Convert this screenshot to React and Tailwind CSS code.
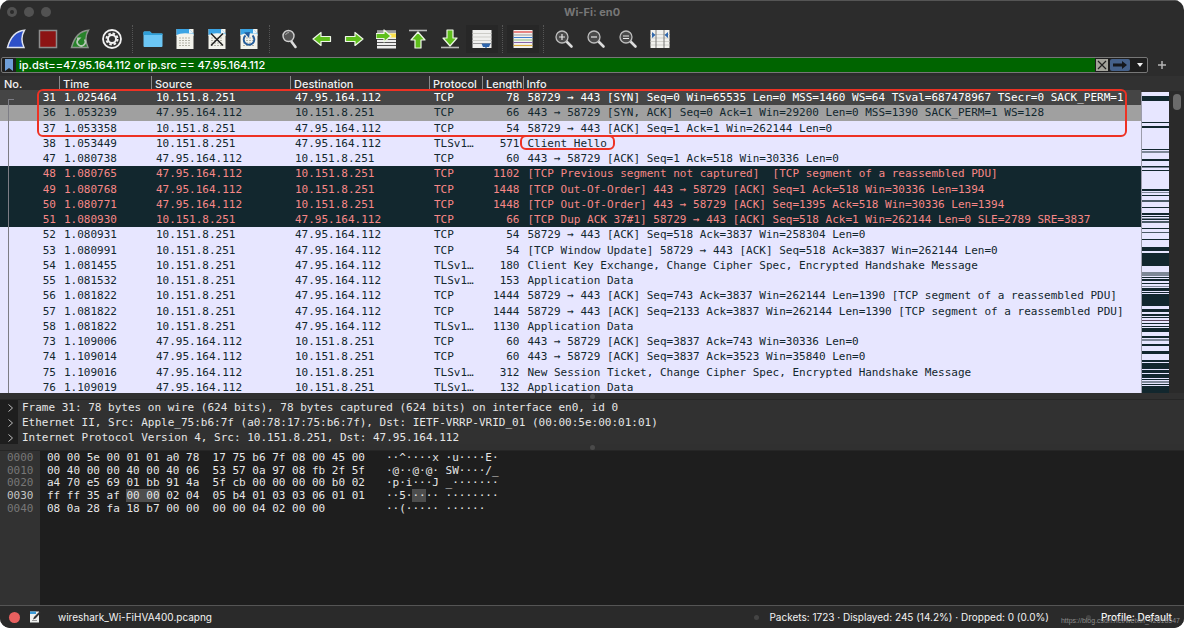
import React from 'react';

const packets = [
  ['31', '1.025464', 'TCP', '78', '58729 → 443 [SYN] Seq=0 Win=65535 Len=0 MSS=1460 WS=64 TSval=687478967 TSecr=0 SACK_PERM=1', 'out', 'selected'],
  ['36', '1.053239', 'TCP', '66', '443 → 58729 [SYN, ACK] Seq=0 Ack=1 Win=29200 Len=0 MSS=1390 SACK_PERM=1 WS=128', 'in', 'syn'],
  ['37', '1.053358', 'TCP', '54', '58729 → 443 [ACK] Seq=1 Ack=1 Win=262144 Len=0', 'out', 'tcp'],
  ['38', '1.053449', 'TLSv1…', '571', 'Client Hello', 'out', 'tcp'],
  ['47', '1.080738', 'TCP', '60', '443 → 58729 [ACK] Seq=1 Ack=518 Win=30336 Len=0', 'in', 'tcp'],
  ['48', '1.080765', 'TCP', '1102', '[TCP Previous segment not captured]  [TCP segment of a reassembled PDU]', 'in', 'bad'],
  ['49', '1.080768', 'TCP', '1448', '[TCP Out-Of-Order] 443 → 58729 [ACK] Seq=1 Ack=518 Win=30336 Len=1394', 'in', 'bad'],
  ['50', '1.080771', 'TCP', '1448', '[TCP Out-Of-Order] 443 → 58729 [ACK] Seq=1395 Ack=518 Win=30336 Len=1394', 'in', 'bad'],
  ['51', '1.080930', 'TCP', '66', '[TCP Dup ACK 37#1] 58729 → 443 [ACK] Seq=518 Ack=1 Win=262144 Len=0 SLE=2789 SRE=3837', 'out', 'bad'],
  ['52', '1.080931', 'TCP', '54', '58729 → 443 [ACK] Seq=518 Ack=3837 Win=258304 Len=0', 'out', 'tcp'],
  ['53', '1.080991', 'TCP', '54', '[TCP Window Update] 58729 → 443 [ACK] Seq=518 Ack=3837 Win=262144 Len=0', 'out', 'tcp'],
  ['54', '1.081455', 'TLSv1…', '180', 'Client Key Exchange, Change Cipher Spec, Encrypted Handshake Message', 'out', 'tcp'],
  ['55', '1.081532', 'TLSv1…', '153', 'Application Data', 'out', 'tcp'],
  ['56', '1.081822', 'TCP', '1444', '58729 → 443 [ACK] Seq=743 Ack=3837 Win=262144 Len=1390 [TCP segment of a reassembled PDU]', 'out', 'tcp'],
  ['57', '1.081822', 'TCP', '1444', '58729 → 443 [ACK] Seq=2133 Ack=3837 Win=262144 Len=1390 [TCP segment of a reassembled PDU]', 'out', 'tcp'],
  ['58', '1.081822', 'TLSv1…', '1130', 'Application Data', 'out', 'tcp'],
  ['73', '1.109006', 'TCP', '60', '443 → 58729 [ACK] Seq=3837 Ack=743 Win=30336 Len=0', 'in', 'tcp'],
  ['74', '1.109014', 'TCP', '60', '443 → 58729 [ACK] Seq=3837 Ack=3523 Win=35840 Len=0', 'in', 'tcp'],
  ['75', '1.109016', 'TLSv1…', '312', 'New Session Ticket, Change Cipher Spec, Encrypted Handshake Message', 'in', 'tcp'],
  ['76', '1.109019', 'TLSv1…', '132', 'Application Data', 'in', 'tcp'],
];

const rowColors = {
  selected: 'bg-[#454545] text-white',
  syn: 'bg-[#a0a0a0] text-[#12272e]',
  tcp: 'bg-[#e7e6ff] text-[#12272e]',
  bad: 'bg-[#12272e] text-[#f78787]',
};

const LOCAL = '10.151.8.251';
const REMOTE = '47.95.164.112';

// [y, height, color] of each stripe in the packet overview
const D = '#12272e';
const G = '#7d8797';
const stripes = [
  [4, 5, D], [30, 1, D], [34, 2, D], [57, 1, D], [59, 2, G], [67, 2, D], [74, 1, D], [75, 1, G],
  [78, 1, D], [97, 2, D], [100, 1, G], [103, 1, D], [108, 2, '#4a5a66'], [115, 1, D], [121, 2, D],
  [124, 1, D], [126, 1, G], [127, 1, D], [129, 2, '#4a5a66'], [136, 1, D], [140, 1, '#4a5a66'],
  [147, 1, D], [155, 4, D], [161, 13, D], [180, 4, G], [185, 1, D], [187, 2, D], [191, 1, D],
  [194, 1, G], [196, 3, D], [200, 1, D], [202, 12, D], [217, 3, D], [222, 2, D], [225, 1, D],
  [228, 1, '#55415a'], [231, 1, D], [234, 1, D], [236, 4, D], [244, 2, D], [247, 2, G], [252, 2, D],
  [259, 3, D], [268, 2, D], [271, 6, D], [278, 3, D], [282, 4, D], [287, 1, D], [289, 2, G],
  [292, 1, D], [294, 7, D],
];

const details = [
  'Frame 31: 78 bytes on wire (624 bits), 78 bytes captured (624 bits) on interface en0, id 0',
  'Ethernet II, Src: Apple_75:b6:7f (a0:78:17:75:b6:7f), Dst: IETF-VRRP-VRID_01 (00:00:5e:00:01:01)',
  'Internet Protocol Version 4, Src: 10.151.8.251, Dst: 47.95.164.112',
];

const mark = (s) => <span className="bg-[#4d4d4d]">{s}</span>;

const hexRows = [
  ['0000', '00 00 5e 00 01 01 a0 78  17 75 b6 7f 08 00 45 00', '··^····x ·u····E·'],
  ['0010', '00 40 00 00 40 00 40 06  53 57 0a 97 08 fb 2f 5f', '·@··@·@· SW····/_'],
  ['0020', 'a4 70 e5 69 01 bb 91 4a  5f cb 00 00 00 00 b0 02', '·p·i···J _·······'],
  ['0030', <>ff ff 35 af {mark('00 00')} 02 04  05 b4 01 03 03 06 01 01</>, <>··5·{mark('··')}·· ········</>],
  ['0040', '08 0a 28 fa 18 b7 00 00  00 00 04 02 00 00', '··(····· ······'],
];

const Icon = ({ children }) => (
  <svg viewBox="0 0 20 20" className="size-5 shrink-0" fill="none">{children}</svg>
);

const Page = ({ children }) => (
  <Icon>
    <path d="M1.500 0h17v20h-17z" fill="#f3f3ec" />
    <path d="M1.500 0H14l4.500 4.500V6h-17z" fill="#3ba4e4" />
    <path d="M14 0v4.500h4.500z" fill="#e8f4fb" />
    <path d="M1.500 6q5-3 17-1v2h-17z" fill="#f3f3ec" />
    <path d="M4 9h12M4 11.500h12M4 14h12M4 16.500h12" stroke="#b3b3a6" strokeDasharray="2 1" />
    {children}
  </Icon>
);

const Lens = ({ children }) => (
  <Icon>
    <path d="M12.500 12.500l5 5" stroke="#dcdcdc" strokeWidth="2.600" strokeLinecap="round" />
    <circle cx="8" cy="8" r="6" fill="#4a4a4a" stroke="#bdbdbd" strokeWidth="1.300" />
    <path d={children} stroke="#e6e6e6" strokeWidth="1.200" />
  </Icon>
);

const arrow = { fill: '#5fbf1c', stroke: '#eef7e6', strokeWidth: 1.2, strokeLinejoin: 'round' };

const toolbar = [
  [
    ['Start capture', <Icon><path d="M1.500 18.500C4 9 9 2 18.500 1.200c-3.500 6-3.500 11-.5 17.300z" fill="#2d50c8" stroke="#dfe3ee" strokeWidth="1.500" /></Icon>],
    ['Stop capture', <Icon><path d="M1.500 1.500h17v17h-17z" fill="#8c1414" stroke="#8d8d8d" strokeWidth="1.500" /></Icon>],
    ['Restart capture', <Icon>
      <path d="M1.500 18.500C4 9 9 2 18.500 1.200c-3.500 6-3.500 11-.5 17.300z" fill="#27832a" stroke="#8b938b" strokeWidth="1.500" />
      <path d="M8 10.500a4 4 0 1 0 6.500 0" stroke="#b6c8b6" strokeWidth="1.700" /><path d="M7 13V8.500h4.500z" fill="#b6c8b6" />
    </Icon>],
    ['Capture options', <Icon>
      <circle cx="10" cy="10" r="9" fill="#333" stroke="#f2f2f2" strokeWidth="1.800" />
      <circle cx="10" cy="10" r="5.500" stroke="#f2f2f2" strokeWidth="2" strokeDasharray="2.500 1.800" />
      <circle cx="10" cy="10" r="4" stroke="#f2f2f2" strokeWidth="2" />
    </Icon>],
  ],
  [
    ['Open file', <Icon><path d="M.5 3.500q0-1 1-1H7l2 2h9.500q1 0 1 1V17q0 1-1 1h-17q-1 0-1-1z" fill="#6cc7f5" /><path d="M.5 6h19V4.500H9L7 2.500H1.500q-1 0-1 1z" fill="#2f9fd8" /></Icon>],
    ['Save file', <Page />],
    ['Close file', <Page><path d="M4 4.500l12 12M16 4.500l-12 12" stroke="#222" strokeWidth="1.500" /></Page>],
    ['Reload file', <Page><path d="M6.500 6.500A5.300 5.300 0 1 0 13.500 6.500" stroke="#245d9c" strokeWidth="1.900" /><path d="M5 3.500l6-.5-1 6z" fill="#245d9c" /></Page>],
  ],
  [
    ['Find packet', <Icon>
      <path d="M11 12l4.500 6" stroke="#dcdcdc" strokeWidth="2.600" strokeLinecap="round" />
      <circle cx="8.500" cy="7" r="5.500" fill="#555" stroke="#cfcfcf" strokeWidth="1.400" /><path d="M5.500 6q1-2.500 3.500-2.500" stroke="#aaa" />
    </Icon>],
    ['Previous packet', <Icon><path d="M1 10l8-6.500v4h9.500v5H9v4z" {...arrow} /></Icon>],
    ['Next packet', <Icon><path d="M19 10l-8-6.500v4H1.500v5H11v4z" {...arrow} /></Icon>],
    ['Go to packet', <Icon>
      <path d="M1 1.500h19v18H1z" fill="#eee" /><path d="M13 4.500h7v4h-7z" fill="#fbe04a" />
      <path d="M1 3h19M1 10.500h19M1 13.500h19M1 16.500h19" stroke="#555" strokeWidth="1.200" />
      <path d="M15 7L8 1v3.500H0v5h8V13z" {...arrow} />
    </Icon>],
    ['First packet', <Icon><path d="M1 1.500h18" stroke="#b9b9b9" strokeWidth="1.600" /><path d="M10 3l7 8h-4v8H7v-8H3z" {...arrow} /></Icon>],
    ['Last packet', <Icon><path d="M1 18.500h18" stroke="#b9b9b9" strokeWidth="1.600" /><path d="M10 17l7-8h-4V1H7v8H3z" {...arrow} /></Icon>],
    ['Auto scroll', <Icon>
      <path d="M.5 1h19v18H.5z" fill="#f0f0ee" /><path d="M.5 4.500h19M.5 8h19M.5 11.500h19" stroke="#cdcdc8" /><path d="M.5 14.500h19" stroke="#999" />
      <path d="M9.500 14.500h9L17 18h-2l-1 1.500-1-1.500h-2z" fill="#2e66ad" />
    </Icon>, true],
  ],
  [
    ['Colorize packets', <Icon>
      <path d="M.5 1h19v18H.5z" fill="#f2f2f0" />
      <path d="M.5 3h19" stroke="#e03b3b" strokeWidth="1.200" /><path d="M.5 6h19" stroke="#999" />
      <path d="M.5 8.500h19" stroke="#3f7fd0" /><path d="M.5 11h19" stroke="#8fbf80" />
      <path d="M.5 13.500h19" stroke="#8564a8" /><path d="M.5 16.500h19" stroke="#d9ad3a" strokeWidth="1.200" />
    </Icon>, true],
  ],
  [
    ['Zoom in', <Lens>M5 8h6M8 5v6</Lens>],
    ['Zoom out', <Lens>M5 8h6</Lens>],
    ['Normal size', <Lens>M5 7h6M5 9.500h6</Lens>],
    ['Resize columns', <Icon>
      <path d="M.5 1h19v18H.5z" fill="#f0f0ee" /><path d="M.5 5.500h19M.5 9h19M.5 12.500h19M.5 16h19" stroke="#cfcfca" />
      <path d="M6 1v18M14 1v18" stroke="#777" /><path d="M2 3v6l3.500-3zM18 3v6l-3.500-3z" fill="#2e66ad" />
    </Icon>],
  ],
];

const TitleBar = () => (
  <header className="flex h-[23px] items-center border-t border-[#555555] px-[7px]">
    <div className="flex flex-1 gap-[7px]">
      <span className="flex size-2.5 items-center justify-center rounded-full bg-[#525252]"><span className="size-1 rounded-full bg-[#2b2b2b]" /></span>
      <span className="size-2.5 rounded-full bg-[#525252]" />
      <span className="size-2.5 rounded-full bg-[#525252]" />
    </div>
    <h1 className="text-[11px] font-bold text-[#777777]">Wi-Fi: en0</h1>
    <div className="flex-1" />
  </header>
);

const Toolbar = () => (
  <nav className="flex h-[31px] items-center">
    {toolbar.map((group, i) => (
      <React.Fragment key={i}>
        {i > 0 && <span className="flex w-[9px] justify-center"><span className="h-7 border-l border-dotted border-[#555555]" /></span>}
        {group.map(([label, icon, active]) => (
          <button key={label} aria-label={label} className={`flex h-7 w-8 items-center justify-center ${active ? 'bg-[#272727]' : ''}`}>
            {icon}
          </button>
        ))}
      </React.Fragment>
    ))}
  </nav>
);

const FilterBar = () => (
  <form className="flex h-[22px] items-center">
    <div className="ml-px flex h-4 flex-1 items-center rounded-xs border border-[#777777] bg-[#1e1e1e]">
      <button type="button" aria-label="Bookmarks" className="flex w-[14px] justify-center">
        <svg viewBox="0 0 8 12" className="h-3 w-2"><path d="M0 0h8v12L4 9l-4 3z" fill="#6f9fd8" /></svg>
      </button>
      <input
        aria-label="Display filter"
        defaultValue="ip.dst==47.95.164.112 or ip.src == 47.95.164.112"
        className="h-[14px] min-w-0 flex-1 bg-[#006400] pl-[3px] text-[11px] font-medium text-white outline-none"
      />
      <div className="flex h-[14px] items-center gap-[2px] pl-px">
        <button type="button" aria-label="Clear" className="flex size-3 items-center justify-center bg-[#a3a39b]">
          <svg viewBox="0 0 10 10" className="size-2.5"><path d="M1 1l8 8M9 1L1 9" stroke="#222" strokeWidth="1.2" /></svg>
        </button>
        <button aria-label="Apply" className="flex h-3 w-5 items-center justify-center rounded-xs bg-[#45618a]">
          <svg viewBox="0 0 14 8" className="h-2 w-3.5"><path d="M0 2.500h9V0l5 4-5 4V5.500H0z" fill="#15181d" /></svg>
        </button>
        <button type="button" aria-label="Recent filters" className="flex w-[15px] justify-center">
          <svg viewBox="0 0 6 4" className="h-1 w-1.5"><path d="M0 0h6L3 4z" fill="#f0f0f0" /></svg>
        </button>
      </div>
    </div>
    <button type="button" aria-label="Add filter button" className="flex w-9 justify-center pr-2">
      <svg viewBox="0 0 8 8" className="size-2"><path d="M4 0v8M0 4h8" stroke="#b5b5b5" strokeWidth="1.5" /></svg>
    </button>
  </form>
);

const PacketList = () => (
  <section className="relative flex h-[317px] overflow-hidden bg-[#313131]">
    <table className="h-[319px] min-w-0 flex-1 table-fixed border-collapse">
      <colgroup>
        <col className="w-[59px]" />
        <col className="w-[92px]" />
        <col className="w-[139px]" />
        <col className="w-[139px]" />
        <col className="w-[53px]" />
        <col className="w-[40px]" />
        <col />
      </colgroup>
      <thead>
        <tr className="h-[14px] text-left text-[11px] leading-[16px] text-[#f0f0f0]">
          {['No.', 'Time', 'Source', 'Destination', 'Protocol', 'Length', 'Info'].map((h) => (
            <th key={h} className="overflow-hidden p-0 font-medium whitespace-nowrap">
              <div className={`h-[14px] overflow-hidden ${h === 'No.' ? 'pl-1' : 'border-l border-[#8a8a8a] pl-[3px]'}`}>{h}</div>
            </th>
          ))}
        </tr>
      </thead>
      <tbody className="font-['DejaVu_Sans_Mono',monospace] text-[11px] leading-[15px]">
        {packets.map(([no, time, proto, len, info, dir, kind]) => (
          <tr key={no} className={`whitespace-pre ${rowColors[kind]}`}>
            <td className="p-0 pr-[3px] text-right">{no}</td>
            <td className="p-0 pl-[5px]">{time}</td>
            <td className="p-0 pl-[5px]">{dir === 'out' ? LOCAL : REMOTE}</td>
            <td className="p-0 pl-[5px]">{dir === 'out' ? REMOTE : LOCAL}</td>
            <td className="p-0 pl-[5px]">{proto}</td>
            <td className="p-0 pr-[3px] text-right">{len}</td>
            <td className="overflow-hidden p-0 pl-[5px]">{info}</td>
          </tr>
        ))}
      </tbody>
    </table>
    <div className="w-7 pt-4">
      <svg viewBox="0 0 28 301" preserveAspectRatio="none" className="h-[301px] w-7 border-l border-[#9c9cab]" shapeRendering="crispEdges">
        <path d="M0 0h28v301H0z" fill="#e7e6ff" />
        {stripes.map(([y, h, color]) => (
          <rect key={y} y={y} width="28" height={h} fill={color} />
        ))}
      </svg>
    </div>
    <div className="flex w-[15px] justify-center pt-[15px]">
      <div className="flex w-full justify-center bg-[#2a2a2a] pt-[3px]">
        <div className="h-4 w-2 rounded-full bg-[#6b6b6b]" />
      </div>
    </div>

    {/* conversation bracket and highlights */}
    <div className="absolute top-[23px] bottom-0 left-2 w-1.5 border-t border-l border-[#7d7d85]" />
    <div className="absolute top-[13px] right-[57px] left-[37px] h-[48px] rounded-md border-2 border-[#ee3224]" />
    <div className="absolute top-[59px] left-[520px] h-[15px] w-[95px] rounded-md border-2 border-[#ee3224]" />
  </section>
);

const Splitter = () => (
  <div className="flex h-[7px] items-center justify-center border-b border-[#262626] bg-[#303030]">
    <span className="size-[5px] rounded-full bg-[#4a4a4a]" />
  </div>
);

const PacketDetails = () => (
  <section className="h-[44px] overflow-hidden font-['DejaVu_Sans_Mono',monospace] text-[11px] leading-[15px] text-[#e6e6e6]">
    {details.map((line) => (
      <div key={line} className="flex bg-[#313131] whitespace-pre">
        <button aria-label="Expand" className="flex w-[18px] items-center justify-center bg-[#1e1e1e] pl-[3px]">
          <svg viewBox="0 0 5 8" className="h-2 w-[5px]"><path d="M.5.5L4.500 4l-4 3.500" fill="none" stroke="#bdbdbd" /></svg>
        </button>
        <span className="pl-1">{line}</span>
      </div>
    ))}
  </section>
);

const HexDump = () => (
  <section className="flex flex-1 items-start bg-[linear-gradient(to_right,#323232_40px,#1e1e1e_40px)] pt-px">
    <table className="h-[63px] border-collapse font-['DejaVu_Sans_Mono',monospace] text-[11px] leading-[12px] whitespace-pre text-[#e6e6e6]">
      <tbody>
        {hexRows.map(([offset, bytes, ascii]) => (
          <tr key={offset}>
            <td className={`w-10 p-0 pl-[7px] ${offset === '0030' ? 'text-[#c4c4c4]' : 'text-[#777777]'}`}>{offset}</td>
            <td className="p-0 pl-[7px]">{bytes}</td>
            <td className="p-0 pl-[21px]">{ascii}</td>
          </tr>
        ))}
      </tbody>
    </table>
  </section>
);

const StatusBar = () => (
  <footer className="relative flex h-[23px] items-center border-t border-[#555555] bg-[#2a2a2a] text-[10px] text-[#f4f4f4]">
    <button aria-label="Expert information" className="ml-[9px] size-[11px] rounded-full bg-[#e8605f]" />
    <button aria-label="Capture comment" className="ml-[9px]">
      <svg viewBox="0 0 12 12" className="size-3">
        <path d="M1 .5h9v11H1z" fill="#eef0ee" /><path d="M1 .5h6v2.500H1z" fill="#3b9bd8" />
        <path d="M4 8.500l1-2.500 5.500-5.500 1.200 1.200L6.500 7.500z" fill="#333" /><path d="M3 9.500h5" stroke="#999" />
      </svg>
    </button>
    <span className="ml-[17px] flex-1">wireshark_Wi-FiHVA400.pcapng</span>
    <span className="mr-[10px] size-[5px] rounded-full bg-[#444444]" />
    <span>Packets: 1723 · Displayed: 245 (14.2%) · Dropped: 0 (0.0%)</span>
    <span className="mr-[10px] ml-[37px] size-[5px] rounded-full bg-[#444444]" />
    <button className="mr-3 font-medium">Profile: Default</button>
    <span className="absolute right-1 bottom-[3px] font-['Liberation_Sans',sans-serif] text-[7px] leading-[8px] text-[#8c8c8c]">https://blog.csdn.net/weixin_42618547</span>
  </footer>
);

export default function App() {
  return (
    <div className="flex min-h-screen flex-col overflow-hidden rounded-[10px] bg-[#2c2c2c] font-['Inter',sans-serif]">
      <TitleBar />
      <Toolbar />
      <FilterBar />
      <PacketList />
      <Splitter />
      <PacketDetails />
      <Splitter />
      <HexDump />
      <StatusBar />
    </div>
  );
}
